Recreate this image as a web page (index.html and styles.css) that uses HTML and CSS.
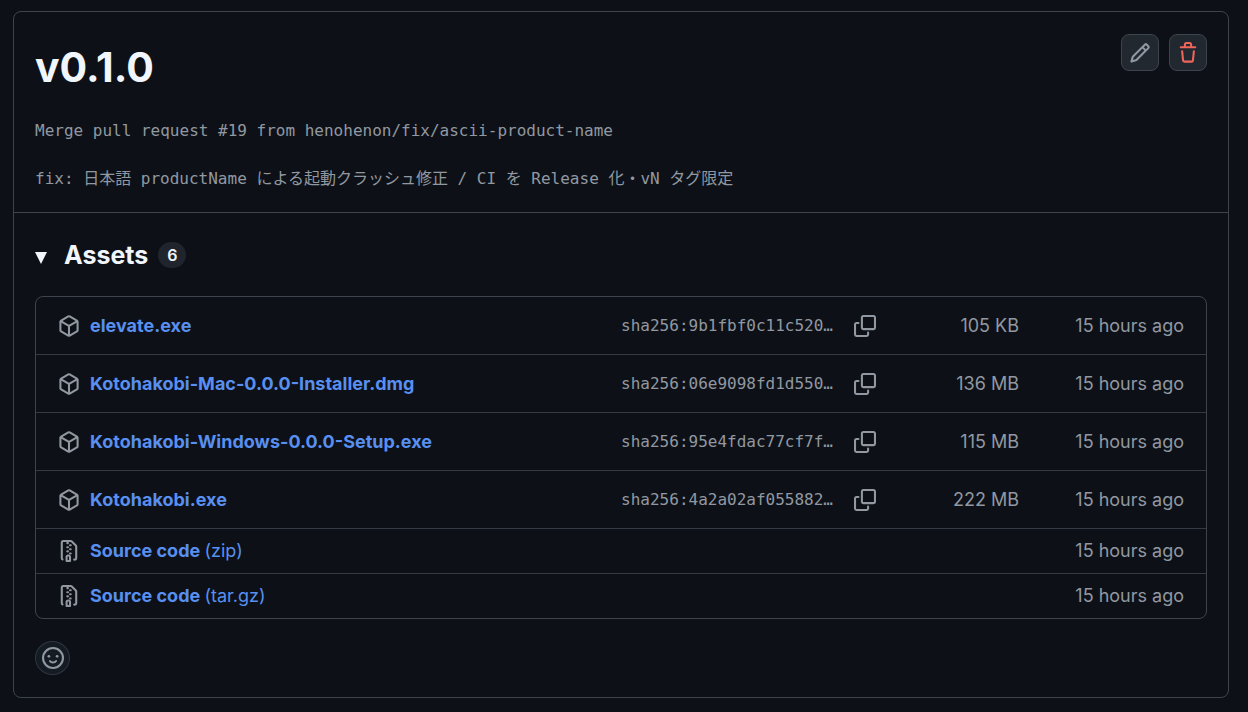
FILE: index.html
```html
<!DOCTYPE html>
<html lang="en">
<head>
<meta charset="utf-8">
<title>v0.1.0</title>
<link rel="stylesheet" href="styles.css">
</head>
<body>
<svg class="sprite" aria-hidden="true">
  <symbol id="pencil" viewBox="0 0 16 16"><path d="M11.013 1.427a1.75 1.75 0 0 1 2.474 0l1.086 1.086a1.75 1.75 0 0 1 0 2.474l-8.61 8.61c-.21.21-.47.364-.756.445l-3.251.93a.75.75 0 0 1-.927-.928l.929-3.25c.081-.286.235-.547.445-.758l8.61-8.61Zm.176 4.823L9.75 4.81l-6.286 6.287a.253.253 0 0 0-.064.108l-.558 1.953 1.953-.558a.253.253 0 0 0 .108-.064Zm1.238-3.763a.25.25 0 0 0-.354 0L10.811 3.75l1.439 1.44 1.263-1.263a.25.25 0 0 0 0-.354Z"/></symbol>
  <symbol id="trash" viewBox="0 0 16 16"><path d="M11 1.75V3h2.25a.75.75 0 0 1 0 1.5H2.75a.75.75 0 0 1 0-1.5H5V1.75C5 .784 5.784 0 6.75 0h2.5C10.216 0 11 .784 11 1.75ZM4.496 6.675l.66 6.6a.25.25 0 0 0 .249.225h5.19a.25.25 0 0 0 .249-.225l.66-6.6a.75.75 0 0 1 1.492.149l-.66 6.6A1.748 1.748 0 0 1 10.595 15h-5.19a1.75 1.75 0 0 1-1.741-1.575l-.66-6.6a.75.75 0 1 1 1.492-.15ZM6.5 1.75V3h3V1.75a.25.25 0 0 0-.25-.25h-2.5a.25.25 0 0 0-.25.25Z"/></symbol>
  <symbol id="package" viewBox="0 0 16 16"><path d="m8.878.392 5.25 3.045c.54.314.872.89.872 1.514v6.098a1.75 1.75 0 0 1-.872 1.514l-5.25 3.045a1.75 1.75 0 0 1-1.756 0l-5.25-3.045A1.75 1.75 0 0 1 1 11.049V4.951c0-.624.332-1.201.872-1.514L7.122.392a1.75 1.75 0 0 1 1.756 0ZM7.875 1.69l-4.63 2.685L8 7.133l4.755-2.758-4.63-2.685a.248.248 0 0 0-.25 0ZM2.5 5.677v5.372c0 .09.047.171.125.216l4.625 2.683V8.432Zm6.25 8.271 4.625-2.683a.25.25 0 0 0 .125-.216V5.677L8.75 8.432Z"/></symbol>
  <symbol id="zip" viewBox="0 0 16 16"><path d="M3.5 1.75v11.5c0 .09.048.173.126.217a.75.75 0 0 1-.752 1.298A1.748 1.748 0 0 1 2 13.25V1.75C2 .784 2.784 0 3.75 0h5.586c.464 0 .909.185 1.237.513l2.914 2.914c.329.328.513.773.513 1.237v8.586A1.75 1.75 0 0 1 12.25 15h-.5a.75.75 0 0 1 0-1.5h.5a.25.25 0 0 0 .25-.25V4.664a.25.25 0 0 0-.073-.177L9.513 1.573a.25.25 0 0 0-.177-.073H7.25a.75.75 0 0 1 0 1.5h-.5a.75.75 0 0 1 0-1.5h-3a.25.25 0 0 0-.25.25Zm3.75 8.75h.5c.966 0 1.75.784 1.75 1.75v3a.75.75 0 0 1-.75.75h-2.5a.75.75 0 0 1-.75-.75v-3c0-.966.784-1.75 1.75-1.75ZM6 5.25a.75.75 0 0 1 .75-.75h.5a.75.75 0 0 1 0 1.5h-.5A.75.75 0 0 1 6 5.25Zm.75 2.25h.5a.75.75 0 0 1 0 1.5h-.5a.75.75 0 0 1 0-1.5ZM8 6.75A.75.75 0 0 1 8.75 6h.5a.75.75 0 0 1 0 1.5h-.5A.75.75 0 0 1 8 6.75ZM8.75 3h.5a.75.75 0 0 1 0 1.5h-.5a.75.75 0 0 1 0-1.5ZM8 9.75A.75.75 0 0 1 8.75 9h.5a.75.75 0 0 1 0 1.5h-.5A.75.75 0 0 1 8 9.75Zm-1 2.5v2.25h1v-2.25a.25.25 0 0 0-.25-.25h-.5a.25.25 0 0 0-.25.25Z"/></symbol>
  <symbol id="copy" viewBox="0 0 16 16"><path d="M0 6.75C0 5.784.784 5 1.75 5h1.5a.75.75 0 0 1 0 1.5h-1.5a.25.25 0 0 0-.25.25v7.5c0 .138.112.25.25.25h7.5a.25.25 0 0 0 .25-.25v-1.5a.75.75 0 0 1 1.5 0v1.5A1.75 1.75 0 0 1 9.25 16h-7.5A1.75 1.75 0 0 1 0 14.25Z"/><path d="M5 1.75C5 .784 5.784 0 6.75 0h7.5C15.216 0 16 .784 16 1.75v7.5A1.75 1.75 0 0 1 14.25 11h-7.5A1.75 1.75 0 0 1 5 9.25Zm1.75-.25a.25.25 0 0 0-.25.25v7.5c0 .138.112.25.25.25h7.5a.25.25 0 0 0 .25-.25v-7.5a.25.25 0 0 0-.25-.25Z"/></symbol>
  <symbol id="smiley" viewBox="0 0 16 16"><circle cx="8" cy="8" r="7.25" fill="none" stroke="currentColor" stroke-width="1.5"/><circle cx="5" cy="6.75" r="1"/><circle cx="11" cy="6.75" r="1"/><path d="M5.75 10.2c.5.7 1.3 1.05 2.25 1.05s1.75-.35 2.25-1.05" fill="none" stroke="currentColor" stroke-width="1.5" stroke-linecap="round"/></symbol>
</svg>
<main class="release">
  <header class="release-head">
    <div class="title-row">
      <h1 class="title">v0.1.0</h1>
      <div class="actions">
        <button class="icon-button" type="button" aria-label="Edit"><svg class="icon"><use href="#pencil"/></svg></button>
        <button class="icon-button danger" type="button" aria-label="Delete"><svg class="icon"><use href="#trash"/></svg></button>
      </div>
    </div>
    <p class="message">Merge pull request #19 from henohenon/fix/ascii-product-name</p>
    <p class="message" lang="ja">fix: 日本語 productName による起動クラッシュ修正 / CI を Release 化・vN タグ限定</p>
  </header>
  <section class="release-body">
    <details class="assets" open>
      <summary class="assets-head">
        <svg class="caret" viewBox="0 0 12 12"><path d="M0 0h12L6 12Z"/></svg>
        <h2 class="assets-title">Assets</h2>
        <span class="count">6</span>
      </summary>
      <ul class="list">
        <li class="row">
          <div class="file"><svg class="icon"><use href="#package"/></svg><a class="link" href="#">elevate.exe</a></div>
          <div class="digest"><code class="sha">sha256:9b1fbf0c11c520…</code><button class="copy" type="button" aria-label="Copy"><svg class="icon"><use href="#copy"/></svg></button></div>
          <span class="size">105 KB</span><span class="time">15 hours ago</span>
        </li>
        <li class="row">
          <div class="file"><svg class="icon"><use href="#package"/></svg><a class="link" href="#">Kotohakobi-Mac-0.0.0-Installer.dmg</a></div>
          <div class="digest"><code class="sha">sha256:06e9098fd1d550…</code><button class="copy" type="button" aria-label="Copy"><svg class="icon"><use href="#copy"/></svg></button></div>
          <span class="size">136 MB</span><span class="time">15 hours ago</span>
        </li>
        <li class="row">
          <div class="file"><svg class="icon"><use href="#package"/></svg><a class="link" href="#">Kotohakobi-Windows-0.0.0-Setup.exe</a></div>
          <div class="digest"><code class="sha">sha256:95e4fdac77cf7f…</code><button class="copy" type="button" aria-label="Copy"><svg class="icon"><use href="#copy"/></svg></button></div>
          <span class="size">115 MB</span><span class="time">15 hours ago</span>
        </li>
        <li class="row">
          <div class="file"><svg class="icon"><use href="#package"/></svg><a class="link" href="#">Kotohakobi.exe</a></div>
          <div class="digest"><code class="sha">sha256:4a2a02af055882…</code><button class="copy" type="button" aria-label="Copy"><svg class="icon"><use href="#copy"/></svg></button></div>
          <span class="size">222 MB</span><span class="time">15 hours ago</span>
        </li>
        <li class="row source">
          <div class="file"><svg class="icon"><use href="#zip"/></svg><a class="link" href="#">Source code <span class="format">(zip)</span></a></div>
          <span class="time">15 hours ago</span>
        </li>
        <li class="row source">
          <div class="file"><svg class="icon"><use href="#zip"/></svg><a class="link" href="#">Source code <span class="format">(tar.gz)</span></a></div>
          <span class="time">15 hours ago</span>
        </li>
      </ul>
    </details>
    <button class="react" type="button" aria-label="Add a reaction"><svg class="icon"><use href="#smiley"/></svg></button>
  </section>
</main>
</body>
</html>
```
FILE: styles.css
```css
* { box-sizing: border-box; }
body {
  margin: 0;
  padding: 11px 19px 14px 13px;
  background: #0d1117;
  color: #9198a1;
  font: 18px/28px Inter, "Noto Sans CJK JP", sans-serif;
}
h1, h2, p, ul { margin: 0; padding: 0; }
button { padding: 0; font: inherit; color: inherit; cursor: pointer; }
.sprite { position: absolute; width: 0; height: 0; }
.icon { display: block; flex: none; width: 22px; height: 22px; fill: currentColor; }
.release { border: 1px solid #3d444d; border-radius: 8px; }
.release-head { padding: 22px 21px 21px; border-bottom: 1px solid #3d444d; }
.title-row { display: flex; justify-content: space-between; align-items: flex-start; margin-bottom: 19px; }
.title { color: #f0f6fc; font-size: 41px; line-height: 66px; font-weight: 700; }
.actions { display: flex; gap: 10px; }
.icon-button {
  display: grid;
  place-items: center;
  width: 38px;
  height: 37px;
  border: 1px solid #3d444d;
  border-radius: 8px;
  background: #212830;
}
.danger { color: #f0655a; }
.message { font: 16px/24px "DejaVu Sans Mono", "Noto Sans CJK JP", monospace; }
.message + .message { margin-top: 24px; }
.release-body { padding: 22px 21px; }
.assets-head { display: flex; align-items: center; height: 40px; color: #f0f6fc; list-style: none; cursor: pointer; }
.caret { width: 12px; height: 12px; margin-top: 6px; fill: currentColor; }
.assets-title { margin-left: 17px; font-size: 25px; line-height: 40px; font-weight: 700; }
.count {
  min-width: 28px;
  margin-left: 10px;
  border-radius: 13px;
  background: #20252d;
  font-size: 16px;
  line-height: 26px;
  font-weight: 600;
  text-align: center;
}
.list { margin-top: 21px; border: 1px solid #3d444d; border-radius: 8px; list-style: none; }
.row { display: flex; align-items: center; padding: 15px 22px 14px; }
.row + .row { border-top: 1px solid #353b44; }
.row.source { padding-top: 8px; padding-bottom: 8px; }
.file { display: flex; flex: 1; align-items: center; gap: 10px; min-width: 0; }
.link { color: #588ff0; font-weight: 700; text-decoration: none; }
.format { font-weight: 400; }
.digest { display: flex; align-items: center; gap: 21px; }
.sha { font: 16px/24px "DejaVu Sans Mono", monospace; }
.copy { border: 0; background: none; }
.size { width: 143px; text-align: right; }
.time { width: 165px; text-align: right; }
.react {
  display: grid;
  place-items: center;
  width: 35px;
  height: 34px;
  margin-top: 22px;
  border: 1px solid #2f3742;
  border-radius: 50%;
  background: #151b23;
}
```
